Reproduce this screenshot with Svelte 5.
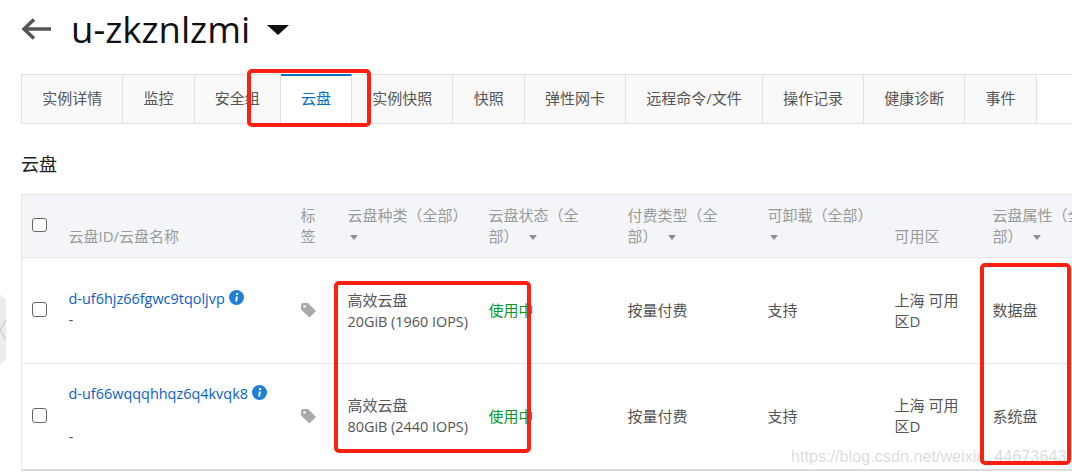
<script>
  const tabs = ['实例详情','监控','安全组','云盘','实例快照','快照','弹性网卡','远程命令/文件','操作记录','健康诊断','事件'];
  const rows = [
    { id:'d-uf6hjz66fgwc9tqoljvp', name:'-', size:'20GiB (1960 IOPS)', attr:'数据盘', cls:'' },
    { id:'d-uf66wqqqhhqz6q4kvqk8', name:'-', size:'80GiB (2440 IOPS)', attr:'系统盘', cls:'far' }
  ];
</script>

<div class="page">
  <header class="head">
    <svg class="back" width="31" height="24" viewBox="0 0 31 24"><path d="M30 12H4M13 2.500 3 12l10 9.500" fill="none" stroke="#555" stroke-width="3.500"/></svg>
    <h1>u-zkznlzmi</h1>
    <span class="caret"></span>
  </header>

  <nav class="tabs">
    {#each tabs as t}
      <div class="tab" class:active={t==='云盘'}>{t}</div>
    {/each}
  </nav>

  <h2>云盘</h2>

  <div class="tablewrap">
    <table>
      <colgroup>
        <col style="width:47px"/><col style="width:232px"/><col style="width:47px"/><col style="width:141px"/><col style="width:139px"/><col style="width:140px"/><col style="width:127px"/><col style="width:98px"/><col style="width:120px"/>
      </colgroup>
      <thead>
        <tr>
          <th class="chk"><span class="box"></span></th>
          <th>云盘ID/云盘名称</th>
          <th>标<br/>签</th>
          <th>云盘种类（全部）<br/><i class="fl first"></i></th>
          <th>云盘状态（全<br/>部）<i class="fl"></i></th>
          <th>付费类型（全<br/>部）<i class="fl"></i></th>
          <th>可卸载（全部）<br/><i class="fl first"></i></th>
          <th>可用区</th>
          <th>云盘属性（全<br/>部）<i class="fl"></i></th>
        </tr>
      </thead>
      <tbody>
        {#each rows as r}
          <tr>
            <td class="chk"><span class="box"></span></td>
            <td class="idcell {r.cls}">
              <div class="idline"><a href="#top">{r.id}</a><svg width="15" height="15" viewBox="0 0 16 16"><circle cx="8" cy="8" r="8" fill="#1f7fd6"/><path d="M7.300 6.800h2.200L8.600 12.200h-1.900zM7.800 3.300h2.100l-.3 2.100H7.500z" fill="#fff"/></svg></div>
              <div class="name">{r.name}</div>
            </td>
            <td class="tagcell"><svg width="15" height="15" viewBox="0 0 15 15"><path d="M0 1.500 1.500 0H7l8 8-6.500 6.500L0 6.500z" fill="#a9a9a9"/><circle cx="3.500" cy="3.500" r="1.300" fill="#fff"/></svg></td>
            <td>高效云盘<br/><span class="lat">{r.size}</span></td>
            <td class="ok">使用中</td>
            <td>按量付费</td>
            <td>支持</td>
            <td>上海 可用<br/>区D</td>
            <td>{r.attr}</td>
          </tr>
        {/each}
      </tbody>
    </table>
  </div>

  <div class="handle"><svg width="6" height="22" viewBox="0 0 6 22"><path d="M6 1 0 11l6 10" fill="none" stroke="#c4c4c4"/></svg></div>
  <div class="wm">https://blog.csdn.net/weixin_44673643</div>
  <div class="mark one"></div>
  <div class="mark two"></div>
  <div class="mark three"></div>
</div>

<style>
  :global(body){margin:0;background:#fff;}
  .page{position:relative;width:1072px;height:475px;overflow:hidden;padding-left:21px;box-sizing:border-box;font-family:"Open Sans","Noto Sans CJK SC",sans-serif;font-size:15px;color:#555;}
  .head{display:flex;align-items:center;height:58px;}
  .back{margin-right:19px;}
  h1{margin:0;font-size:36.500px;font-weight:400;color:#111;line-height:58px;}
  .caret{margin-left:17px;margin-top:2px;border:solid transparent;border-width:10px 11px 0;border-top-color:#111;}
  .tabs{display:flex;margin-top:16px;height:50px;box-sizing:border-box;border:solid #e1e1e1;border-width:1px 0 1px 0;width:1051px;}
  .tab{padding:0 20.150px;border-right:1px solid #e1e1e1;background:#f9f9f9;line-height:46px;flex:none;}
  .tab:first-child{border-left:1px solid #e1e1e1;}
  .tab.active{background:#fff;color:#0070cc;border-top:2px solid #0070cc;margin-top:-1px;line-height:45px;height:50px;box-sizing:border-box;border-bottom:1px solid #fff;}
  h2{margin:0;font-size:18px;font-weight:400;color:#222;line-height:26px;padding-top:27px;height:43px;}
  .tablewrap{width:1051px;overflow:hidden;}
  table{table-layout:fixed;border-collapse:collapse;width:1091px;}
  th,td{padding:0;text-align:left;vertical-align:middle;font-weight:400;line-height:21px;}
  thead tr{background:#f3f5f8;height:63px;border-top:1px solid #e3e6eb;border-bottom:1px solid #e3e6eb;}
  th{color:#9a9a9a;vertical-align:bottom;padding-bottom:10px;}
  th.chk{vertical-align:middle;padding:0;}
  tbody tr{height:106px;border-bottom:1px solid #e5e5e5;}
  tbody tr:last-child{border-bottom:2px solid #dcdcdc;}
  .chk{padding-left:10px;}
  thead .chk{padding-left:10px;}
  .box{display:block;width:12.500px;height:12.500px;border:1.300px solid #666;border-radius:3px;background:#fff;position:relative;top:-1px;}
  tr > :first-child{border-left:1px solid #e3e6eb;}
  .idcell{vertical-align:top;padding-top:30px;}
  .idcell.far{padding-top:19px;}
  .idline{display:flex;align-items:center;gap:4px;height:21px;}
  .idline a{color:#0b5fc4;text-decoration:none;font-size:14.450px;}
  .idline svg{position:relative;top:-1px;}
  .name{margin-top:0;}
  .far .name{margin-top:22px;}
  .tagcell svg{position:relative;top:2px;}
  .lat{font-size:14.400px;}
  .ok{color:#0a9b1e;}
  .fl{display:inline-block;margin-left:10px;vertical-align:middle;border:solid transparent;border-width:5px 4.500px 0;border-top-color:#8f8f8f;}
  .fl.first{margin-left:2px;}
  .handle{position:absolute;left:0;top:294px;width:6px;height:71px;background:#ececec;clip-path:polygon(0 0,100% 8%,100% 92%,0 100%);display:flex;align-items:center;}
  .mark{position:absolute;border:4px solid #fd2011;border-radius:5px;box-sizing:border-box;pointer-events:none;}
  .one{left:247px;top:69px;width:124px;height:58px;}
  .two{left:334px;top:281px;width:197px;height:172px;}
  .three{left:980px;top:263px;width:91px;height:202px;}
  .wm{position:absolute;left:791px;top:447px;font:16.200px "Liberation Sans",sans-serif;color:rgba(150,150,150,.35);white-space:nowrap;}
</style>
